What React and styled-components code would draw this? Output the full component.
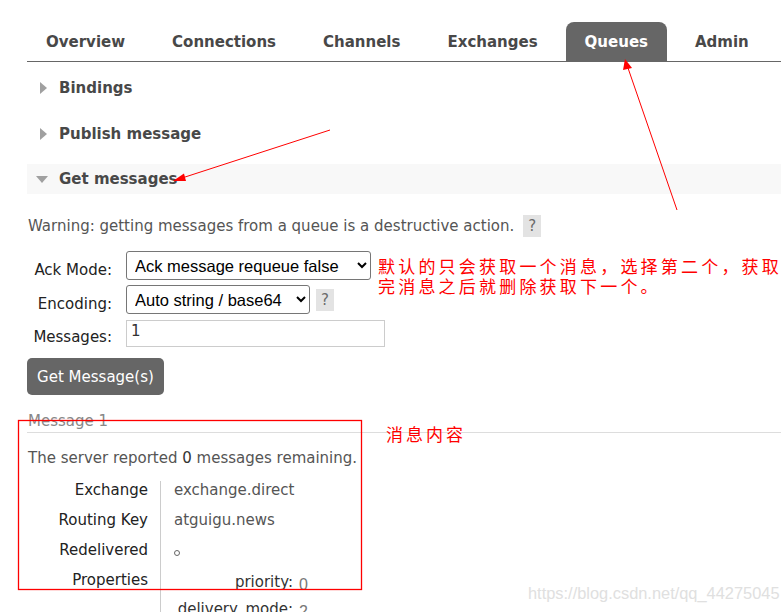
import React from "react";
import styled, { createGlobalStyle } from "styled-components";

const Global = createGlobalStyle`
  html, body { margin: 0; padding: 0; background: #fff; }
  body {
    font-family: "DejaVu Sans", Verdana, sans-serif;
    font-size: 15px;
    color: #484848;
    overflow: hidden;
  }
  * { box-sizing: border-box; }
`;

const Page = styled.div`
  position: relative;
  width: 781px;
  height: 612px;
  overflow: hidden;
  padding: 22px 0 0 27px;
`;

const Tabs = styled.ul`
  display: flex;
  gap: 9px;
  margin: 0;
  padding: 0;
  list-style: none;
  height: 40px;
  border-bottom: 1px solid #666;
`;

const Tab = styled.li`
  padding: 1px 19px 0;
  height: 39px;
  line-height: 39px;
  font-weight: bold;
  font-size: 15px;
  border-radius: 8px 8px 0 0;
  background: ${(p) => (p.$active ? "#666" : "transparent")};
  color: ${(p) => (p.$active ? "#fff" : "#484848")};
`;

const SectionHeader = styled.div`
  display: flex;
  align-items: center;
  height: 30px;
  margin-top: ${(p) => p.$mt}px;
  padding-left: ${(p) => (p.$open ? 9 : 13)}px;
  background: ${(p) => (p.$open ? "#f8f8f8" : "transparent")};
  font-weight: bold;
  font-size: 15px;
  color: #484848;
`;

const Caret = styled.span`
  display: inline-block;
  width: 0;
  height: 0;
  margin-right: ${(p) => (p.$open ? 11 : 12)}px;
  ${(p) =>
    p.$open
      ? `border-left: 6px solid transparent; border-right: 6px solid transparent; border-top: 7px solid #a0a0a0; margin-top: 1px;`
      : `border-top: 6px solid transparent; border-bottom: 6px solid transparent; border-left: 7px solid #a0a0a0;`}
`;

const Warning = styled.p`
  margin: 21px 0 0 1px;
  display: flex;
  align-items: center;
  line-height: 22px;
  color: #555;
`;

const Help = styled.span`
  display: inline-flex;
  align-items: center;
  justify-content: center;
  width: 18px;
  height: 22px;
  margin-left: ${(p) => p.$ml || 6}px;
  background: #e3e3e3;
  color: #6a6a6a;
  font-size: 15px;
`;

const Form = styled.div`
  display: grid;
  grid-template-columns: 85px auto;
  column-gap: 14px;
  row-gap: 5px;
  margin-top: 14px;
  align-items: start;
`;

const Label = styled.div`
  text-align: right;
  color: #222;
  height: ${(p) => p.$h || 29}px;
  padding-top: ${(p) => p.$pt || 8}px;
  line-height: 22px;
  white-space: nowrap;
`;

const Field = styled.div`
  display: flex;
  align-items: center;
`;

const Select = styled.select`
  width: ${(p) => p.$w}px;
  height: 29px;
  font-family: "Liberation Sans", Arial, sans-serif;
  font-size: 16.5px;
  color: #000;
  background: #fff;
  border: 1px solid #767676;
  border-radius: 3px;
  padding: 0 4px;
`;

const Input = styled.input`
  width: 259px;
  height: 27px;
  margin-top: 1px;
  font-family: "DejaVu Sans", Verdana, sans-serif;
  font-size: 15px;
  color: #333;
  border: 1px solid #ccc;
  padding: 0 4px 5px;
  outline: none;
`;

const Button = styled.button`
  display: block;
  margin-top: 11px;
  width: 137px;
  height: 37px;
  border: none;
  border-radius: 5px;
  background: #666;
  color: #fff;
  font-family: "DejaVu Sans", Verdana, sans-serif;
  font-size: 15px;
  padding: 0;
`;

const MessageTitle = styled.div`
  margin-top: 15px;
  padding-left: 1px;
  line-height: 22px;
  color: #888;
  border-bottom: 1px solid #ddd;
`;

const Remaining = styled.p`
  margin: 14px 0 0 1px;
  line-height: 22px;
  color: #555;
  & b { font-weight: normal; color: #333; }
`;

const Details = styled.div`
  display: grid;
  grid-template-columns: 133px auto;
  margin-top: 12px;
`;

const DLabel = styled.div`
  text-align: right;
  padding-right: 12px;
  height: 30px;
  line-height: 18px;
  color: #222;
`;

const DValue = styled.div`
  border-left: 1px solid #ccc;
  padding-left: 13px;
  height: ${(p) => p.$h || 30}px;
  line-height: 18px;
  color: #555;
`;

const Circle = styled.span`
  display: inline-block;
  width: 6px;
  height: 6px;
  border: 1px solid #666;
  border-radius: 50%;
  margin-top: 9px;
`;

const Props = styled.div`
  display: grid;
  grid-template-columns: 119px auto;
  column-gap: 6px;
  row-gap: 6px;
  padding-top: 2px;
`;

const PLabel = styled.div`
  text-align: right;
  color: #333;
  line-height: 18px;
`;

const PVal = styled.div`
  font-family: "Liberation Sans", Arial, sans-serif;
  font-size: 16px;
  color: #777;
  line-height: 18px;
  padding-top: 3px;
`;

const Overlay = styled.svg`
  position: absolute;
  left: 0;
  top: 0;
  pointer-events: none;
`;

const Note = styled.div`
  position: absolute;
  left: ${(p) => p.$x}px;
  top: ${(p) => p.$y}px;
  font-family: "Noto Sans CJK SC", sans-serif;
  font-size: 17px;
  letter-spacing: ${(p) => p.$ls || 3.2}px;
  line-height: 20px;
  color: #ff0000;
  white-space: nowrap;
`;

const Watermark = styled.div`
  position: absolute;
  left: 528px;
  top: 584px;
  font-family: "Liberation Sans", Arial, sans-serif;
  font-size: 16.4px;
  color: #e0e0e0;
  white-space: nowrap;
`;

export default function App() {
  return (
    <>
      <Global />
      <Page>
        <Tabs>
          <Tab>Overview</Tab>
          <Tab>Connections</Tab>
          <Tab>Channels</Tab>
          <Tab>Exchanges</Tab>
          <Tab $active>Queues</Tab>
          <Tab>Admin</Tab>
        </Tabs>

        <SectionHeader $mt={11}>
          <Caret />
          Bindings
        </SectionHeader>
        <SectionHeader $mt={16}>
          <Caret />
          Publish message
        </SectionHeader>
        <SectionHeader $mt={15} $open>
          <Caret $open />
          Get messages
        </SectionHeader>

        <Warning>
          Warning: getting messages from a queue is a destructive action.
          <Help $ml={9}>?</Help>
        </Warning>

        <Form>
          <Label>Ack Mode:</Label>
          <Field>
            <Select $w={245} defaultValue="f">
              <option value="f">Ack message requeue false</option>
            </Select>
          </Field>
          <Label>Encoding:</Label>
          <Field>
            <Select $w={184} defaultValue="a">
              <option value="a">Auto string / base64</option>
            </Select>
            <Help $ml={6}>?</Help>
          </Field>
          <Label $h={28} $pt={7}>Messages:</Label>
          <Field>
            <Input defaultValue="1" readOnly />
          </Field>
        </Form>

        <Button>Get Message(s)</Button>

        <MessageTitle>Message 1</MessageTitle>
        <Remaining>
          The server reported <b>0</b> messages remaining.
        </Remaining>

        <Details>
          <DLabel>Exchange</DLabel>
          <DValue>exchange.direct</DValue>
          <DLabel>Routing Key</DLabel>
          <DValue>atguigu.news</DValue>
          <DLabel>Redelivered</DLabel>
          <DValue>
            <Circle />
          </DValue>
          <DLabel>Properties</DLabel>
          <DValue $h={60}>
            <Props>
              <PLabel>priority:</PLabel>
              <PVal>0</PVal>
              <PLabel>delivery_mode:</PLabel>
              <PVal>2</PVal>
            </Props>
          </DValue>
        </Details>

        <Note $x={378} $y={256}>
          默认的只会获取一个消息，选择第二个，获取
          <br />
          完消息之后就删除获取下一个。
        </Note>
        <Note $x={386} $y={424} $ls={3}>消息内容</Note>
        <Watermark>https://blog.csdn.net/qq_44275045</Watermark>

        <Overlay width="781" height="612" viewBox="0 0 781 612">
          <rect x="18.5" y="420.5" width="343" height="169" fill="none" stroke="#ff0000" strokeWidth="1.3" />
          <line x1="330" y1="130" x2="182" y2="178" stroke="#ff0000" strokeWidth="1" />
          <polygon points="173,181 184,173.5 186,181" fill="#ff0000" />
          <line x1="677" y1="210" x2="628" y2="68" stroke="#ff0000" strokeWidth="1" />
          <polygon points="625,59 623,70 632,68" fill="#ff0000" />
        </Overlay>
      </Page>
    </>
  );
}
